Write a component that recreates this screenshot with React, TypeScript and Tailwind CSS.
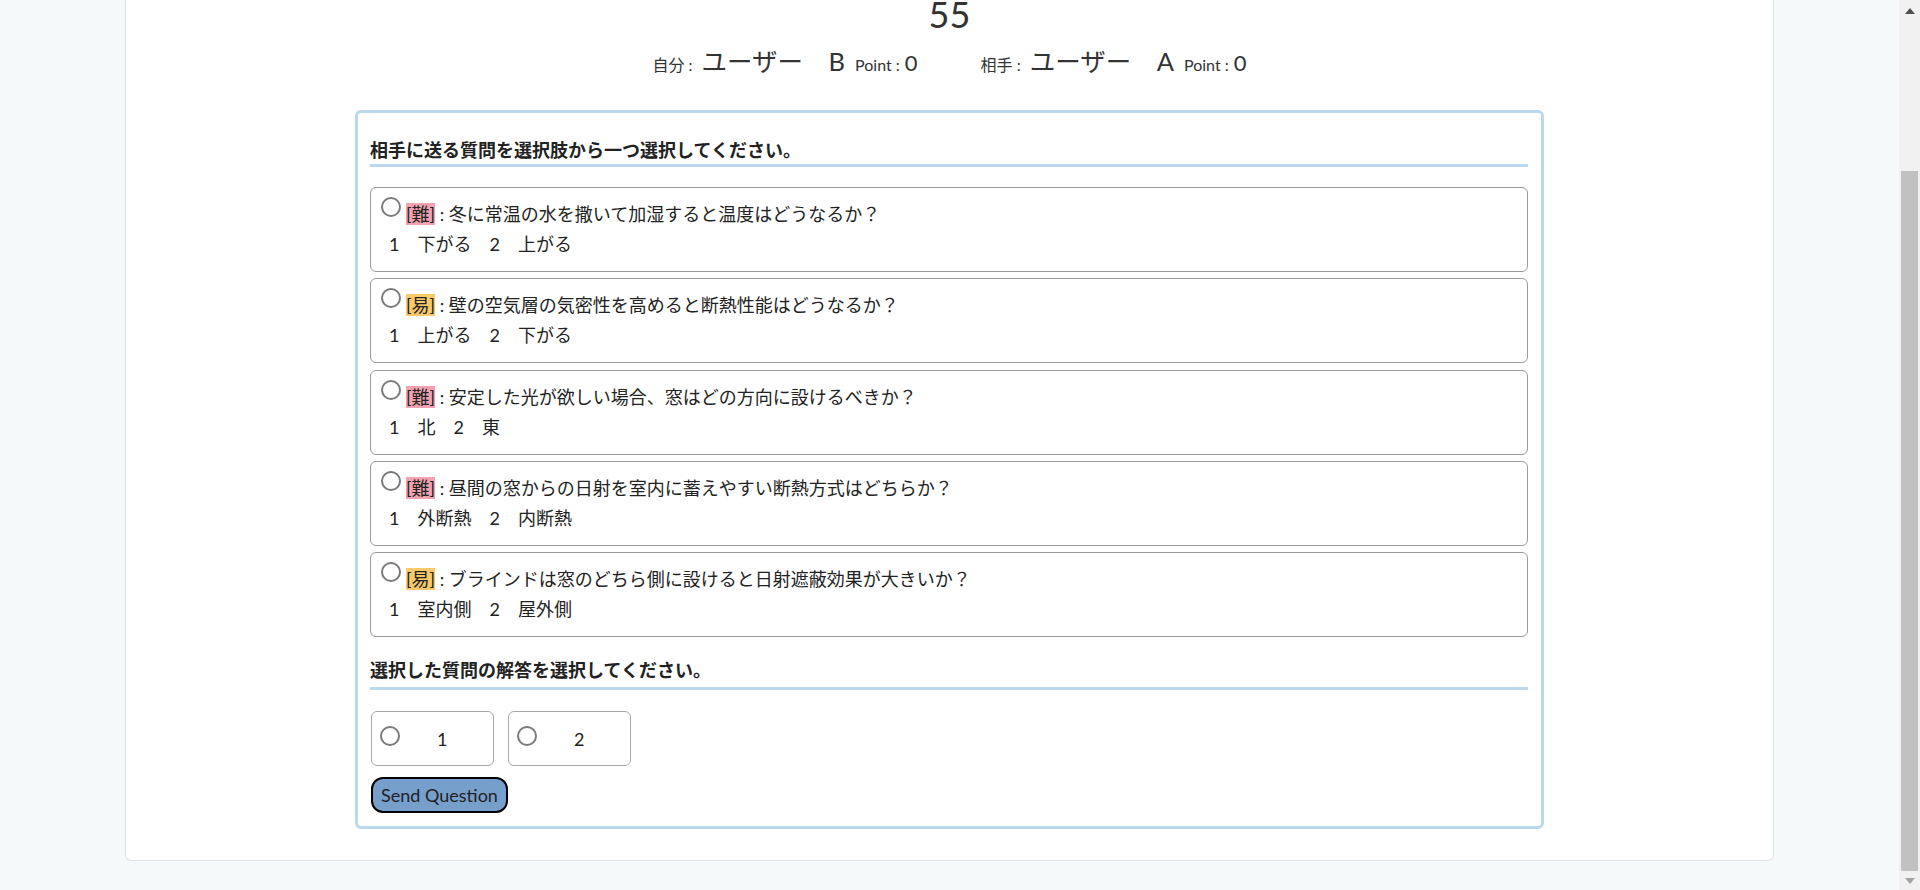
import React from "react";

type Question = {
  level: "難" | "易";
  text: string;
  a1: string;
  a2: string;
};

const questions: Question[] = [
  { level: "難", text: "冬に常温の水を撒いて加湿すると温度はどうなるか？", a1: "下がる", a2: "上がる" },
  { level: "易", text: "壁の空気層の気密性を高めると断熱性能はどうなるか？", a1: "上がる", a2: "下がる" },
  { level: "難", text: "安定した光が欲しい場合、窓はどの方向に設けるべきか？", a1: "北", a2: "東" },
  { level: "難", text: "昼間の窓からの日射を室内に蓄えやすい断熱方式はどちらか？", a1: "外断熱", a2: "内断熱" },
  { level: "易", text: "ブラインドは窓のどちら側に設けると日射遮蔽効果が大きいか？", a1: "室内側", a2: "屋外側" },
];

function Radio() {
  return (
    <span className="inline-block h-5 w-5 shrink-0 rounded-full border-2 border-[#7a7a7a] bg-white"></span>
  );
}

function QuestionCard({ q }: { q: Question }) {
  return (
    <div className="h-[85px] rounded-md border border-[#9a9a9a] pl-[10px] pr-3 pt-[9px]">
      <div className="flex items-start">
        <Radio />
        <p className="ml-[5px] mt-[5px] leading-[24px]">
          <span className={q.level === "難" ? "bg-[#f2a2b0]" : "bg-[#f9c96a]"}>[{q.level}]</span>
          <span> : {q.text}</span>
        </p>
      </div>
      <p className="mt-[6px] pl-[8px] leading-[24px] whitespace-pre">
        {"1　" + q.a1 + "　2　" + q.a2}
      </p>
    </div>
  );
}

function AnswerBox({ n }: { n: string }) {
  return (
    <div className="flex h-[55px] w-[123px] items-center rounded-md border border-[#a8a8a8] pl-[8px]">
      <span className="-mt-[5px] flex">
        <Radio />
      </span>
      <span className="ml-[37px] mt-[1px] font-['Lato']">{n}</span>
    </div>
  );
}

function ScrollBar() {
  return (
    <div className="flex h-screen w-[21px] shrink-0 flex-col bg-[#f1f1f1]">
      <div className="flex h-[21px] items-center justify-center">
        <svg width="10" height="6" viewBox="0 0 10 6">
          <polygon points="5,0 10,6 0,6" fill="#505050" />
        </svg>
      </div>
      <div className="h-[150px]"></div>
      <div className="mx-[2px] flex-1 bg-[#c1c1c1]"></div>
      <div className="flex h-[19px] items-center justify-center">
        <svg width="10" height="6" viewBox="0 0 10 6">
          <polygon points="0,0 10,0 5,6" fill="#a3a3a3" />
        </svg>
      </div>
    </div>
  );
}

export default function App() {
  return (
    <div className="flex h-screen overflow-hidden bg-[#f5f9fa] text-[#222] font-['Lato','Noto_Sans_CJK_JP',sans-serif]">
      <div className="flex-1 px-[125px]">
        <div className="rounded-b-md border-x border-b border-[#dde3e8] bg-white pb-[31px]">
          <div className="flex flex-col items-center">
            <p className="text-[36px] leading-[28px] text-[#333]">55</p>
            <div className="mt-[14px] flex h-[30px] items-baseline text-[#333]">
              <span className="text-[16px]">自分 :</span>
              <span className="ml-[9px] text-[25.5px]">ユーザー　B</span>
              <span className="ml-[10px] text-[16px]">Point :</span>
              <span className="ml-[5px] text-[22px]">0</span>
              <span className="ml-[63px] text-[16px]">相手 :</span>
              <span className="ml-[9px] text-[25.5px]">ユーザー　A</span>
              <span className="ml-[10px] text-[16px]">Point :</span>
              <span className="ml-[5px] text-[22px]">0</span>
            </div>
          </div>

          <div className="mx-auto mt-[38px] w-[1189px] rounded-md border-[3px] border-[#bad9ee] pl-[12px] pr-[13px] pt-[25px] pb-[13px] text-[18px]">
            <h2 className="border-b-[3px] border-[#bad9ee] pb-[2px] font-bold leading-[24px]">
              相手に送る質問を選択肢から一つ選択してください。
            </h2>
            <div className="mt-[20px] flex flex-col gap-[6.3px]">
              {questions.map((q, i) => (
                <QuestionCard key={i} q={q} />
              ))}
            </div>

            <h2 className="mt-[21px] border-b-[3px] border-[#bad9ee] pb-[5px] font-bold leading-[24px]">
              選択した質問の解答を選択してください。
            </h2>
            <div className="mt-[21px] flex gap-[14px] pl-[1px]">
              <AnswerBox n="1" />
              <AnswerBox n="2" />
            </div>
            <button className="ml-[1px] mt-[11px] rounded-xl border-2 border-black bg-[#779fcc] px-[8px] py-[3px] text-[18px] leading-[26px] text-[#222] font-['Lato']">
              Send Question
            </button>
          </div>
        </div>
      </div>
      <ScrollBar />
    </div>
  );
}
